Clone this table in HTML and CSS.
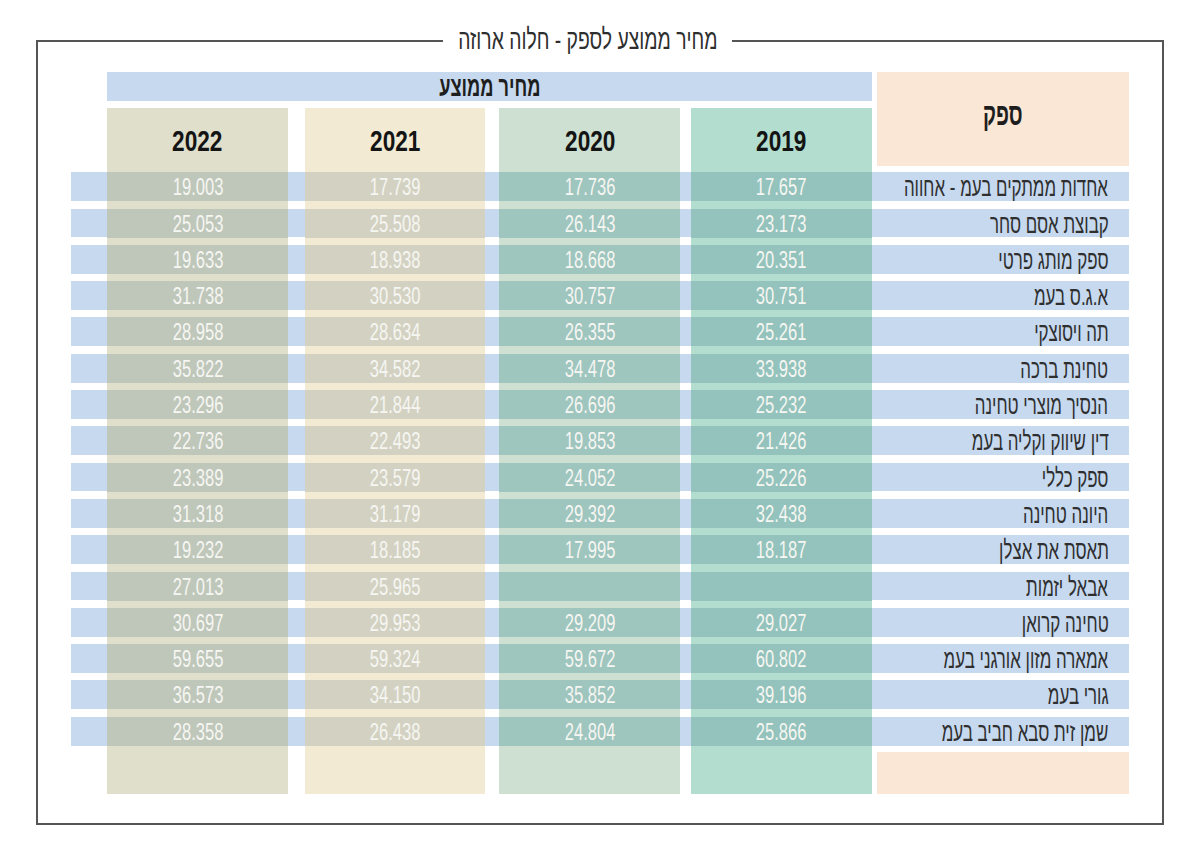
FILE: index.html
```html
<!DOCTYPE html>
<html lang="he" dir="rtl">
<head>
<meta charset="utf-8">
<title>מחיר ממוצע לספק - חלוה ארוזה</title>
<link rel="stylesheet" href="styles.css">
</head>
<body>
<div class="page">
  <div class="frame">
    <div class="title"><span class="sq title-text">מחיר ממוצע לספק - חלוה ארוזה</span></div>
    <div class="table">
      <div class="head-bar"><span class="sq head-text">מחיר ממוצע</span></div>
      <div class="sup-head"><span class="sq sup-text">ספק</span></div>
      <div class="col col-19"><div class="year"><span class="sq year-text">2019</span></div></div>
      <div class="col col-20"><div class="year"><span class="sq year-text">2020</span></div></div>
      <div class="col col-21"><div class="year"><span class="sq year-text">2021</span></div></div>
      <div class="col col-22"><div class="year"><span class="sq year-text">2022</span></div></div>
      <div class="rows">
        <div class="row"><div class="name"><span class="sq name-text">אחדות ממתקים בעמ - אחווה</span></div><div class="num n19"><span class="sq">17.657</span></div><div class="num n20"><span class="sq">17.736</span></div><div class="num n21"><span class="sq">17.739</span></div><div class="num n22"><span class="sq">19.003</span></div></div>
        <div class="row"><div class="name"><span class="sq name-text">קבוצת אסם סחר</span></div><div class="num n19"><span class="sq">23.173</span></div><div class="num n20"><span class="sq">26.143</span></div><div class="num n21"><span class="sq">25.508</span></div><div class="num n22"><span class="sq">25.053</span></div></div>
        <div class="row"><div class="name"><span class="sq name-text">ספק מותג פרטי</span></div><div class="num n19"><span class="sq">20.351</span></div><div class="num n20"><span class="sq">18.668</span></div><div class="num n21"><span class="sq">18.938</span></div><div class="num n22"><span class="sq">19.633</span></div></div>
        <div class="row"><div class="name"><span class="sq name-text">א.ג.ס בעמ</span></div><div class="num n19"><span class="sq">30.751</span></div><div class="num n20"><span class="sq">30.757</span></div><div class="num n21"><span class="sq">30.530</span></div><div class="num n22"><span class="sq">31.738</span></div></div>
        <div class="row"><div class="name"><span class="sq name-text">תה ויסוצקי</span></div><div class="num n19"><span class="sq">25.261</span></div><div class="num n20"><span class="sq">26.355</span></div><div class="num n21"><span class="sq">28.634</span></div><div class="num n22"><span class="sq">28.958</span></div></div>
        <div class="row"><div class="name"><span class="sq name-text">טחינת ברכה</span></div><div class="num n19"><span class="sq">33.938</span></div><div class="num n20"><span class="sq">34.478</span></div><div class="num n21"><span class="sq">34.582</span></div><div class="num n22"><span class="sq">35.822</span></div></div>
        <div class="row"><div class="name"><span class="sq name-text">הנסיך מוצרי טחינה</span></div><div class="num n19"><span class="sq">25.232</span></div><div class="num n20"><span class="sq">26.696</span></div><div class="num n21"><span class="sq">21.844</span></div><div class="num n22"><span class="sq">23.296</span></div></div>
        <div class="row"><div class="name"><span class="sq name-text">דין שיווק וקליה בעמ</span></div><div class="num n19"><span class="sq">21.426</span></div><div class="num n20"><span class="sq">19.853</span></div><div class="num n21"><span class="sq">22.493</span></div><div class="num n22"><span class="sq">22.736</span></div></div>
        <div class="row"><div class="name"><span class="sq name-text">ספק כללי</span></div><div class="num n19"><span class="sq">25.226</span></div><div class="num n20"><span class="sq">24.052</span></div><div class="num n21"><span class="sq">23.579</span></div><div class="num n22"><span class="sq">23.389</span></div></div>
        <div class="row"><div class="name"><span class="sq name-text">היונה טחינה</span></div><div class="num n19"><span class="sq">32.438</span></div><div class="num n20"><span class="sq">29.392</span></div><div class="num n21"><span class="sq">31.179</span></div><div class="num n22"><span class="sq">31.318</span></div></div>
        <div class="row"><div class="name"><span class="sq name-text">תאסת את אצלן</span></div><div class="num n19"><span class="sq">18.187</span></div><div class="num n20"><span class="sq">17.995</span></div><div class="num n21"><span class="sq">18.185</span></div><div class="num n22"><span class="sq">19.232</span></div></div>
        <div class="row"><div class="name"><span class="sq name-text">אבאל יזמות</span></div><div class="num n19"></div><div class="num n20"></div><div class="num n21"><span class="sq">25.965</span></div><div class="num n22"><span class="sq">27.013</span></div></div>
        <div class="row"><div class="name"><span class="sq name-text">טחינה קרואן</span></div><div class="num n19"><span class="sq">29.027</span></div><div class="num n20"><span class="sq">29.209</span></div><div class="num n21"><span class="sq">29.953</span></div><div class="num n22"><span class="sq">30.697</span></div></div>
        <div class="row"><div class="name"><span class="sq name-text">אמארה מזון אורגני בעמ</span></div><div class="num n19"><span class="sq">60.802</span></div><div class="num n20"><span class="sq">59.672</span></div><div class="num n21"><span class="sq">59.324</span></div><div class="num n22"><span class="sq">59.655</span></div></div>
        <div class="row"><div class="name"><span class="sq name-text">גורי בעמ</span></div><div class="num n19"><span class="sq">39.196</span></div><div class="num n20"><span class="sq">35.852</span></div><div class="num n21"><span class="sq">34.150</span></div><div class="num n22"><span class="sq">36.573</span></div></div>
        <div class="row"><div class="name"><span class="sq name-text">שמן זית סבא חביב בעמ</span></div><div class="num n19"><span class="sq">25.866</span></div><div class="num n20"><span class="sq">24.804</span></div><div class="num n21"><span class="sq">26.438</span></div><div class="num n22"><span class="sq">28.358</span></div></div>
      </div>
      <div class="sup-foot"></div>
    </div>
  </div>
</div>
</body>
</html>
```
FILE: styles.css
```css
:root {
  --tracks: 252px 5.3px 181px 10.7px 181px 14px 180px 17.3px 180.7px 36.3px;
  --blue: #c6d9ef;
  --peach: #fae7d5;
}

* { box-sizing: border-box; }

html, body {
  margin: 0;
  background: #ffffff;
}

body {
  font-family: "Liberation Sans", "DejaVu Sans", sans-serif;
  color: #333333;
}

.page {
  padding-top: 40px;
  height: 848px;
}

.frame {
  position: relative;
  width: 1128px;
  height: 785px;
  margin: 0 auto;
  border: 2px solid #555555;
  padding: 29.5px 32.7px 0;
}

.sq {
  display: inline-block;
  white-space: nowrap;
  transform-origin: center center;
}

.title {
  position: absolute;
  top: -17px;
  right: 430px;
  width: 289px;
  height: 30px;
  background: #ffffff;
  display: flex;
  align-items: center;
  justify-content: center;
}

.title-text {
  font-size: 28px;
  line-height: 30px;
  color: #2e2e2e;
  transform: scaleX(0.69);
}

.table {
  display: grid;
  grid-template-columns: var(--tracks);
  grid-template-rows: 29px 7px 58.5px 6.3px 573.3px 6.6px 42px;
}

.head-bar {
  grid-row: 1;
  grid-column: 3 / 10;
  background: var(--blue);
  display: flex;
  align-items: center;
  justify-content: center;
  padding-top: 1px;
}

.head-text {
  font-size: 28px;
  line-height: 28px;
  font-weight: 700;
  color: #1e1e1e;
  transform: scaleX(0.65);
}

.sup-head {
  grid-row: 1 / 4;
  grid-column: 1;
  background: var(--peach);
  display: flex;
  align-items: center;
  justify-content: center;
  padding-bottom: 8px;
}

.sup-text {
  font-size: 32px;
  font-weight: 700;
  color: #1e1e1e;
  transform: scaleX(0.62);
}

.col { grid-row: 3 / 8; }
.col-19 { grid-column: 3; background: #b2ddcf; }
.col-20 { grid-column: 5; background: #cde0d2; }
.col-21 { grid-column: 7; background: #f2ead3; }
.col-22 { grid-column: 9; background: #dfdfcc; }

.year {
  height: 64.8px;
  display: flex;
  align-items: center;
  justify-content: center;
  padding-top: 4px;
}

.year-text {
  font-size: 29px;
  font-weight: 700;
  color: #141414;
  transform: scaleX(0.78);
}

.rows {
  grid-row: 5;
  grid-column: 1 / 11;
  display: flex;
  flex-direction: column;
  gap: 7.5px;
}

.row {
  height: 28.8px;
  display: grid;
  grid-template-columns: var(--tracks);
  background: var(--blue);
}

.name {
  grid-column: 1;
  display: flex;
  align-items: center;
  justify-content: flex-start;
  padding-right: 21px;
  padding-top: 1px;
}

.name-text {
  font-size: 26px;
  line-height: 28px;
  color: #2f2f2f;
  transform-origin: right center;
  transform: scaleX(0.65);
}

.num {
  display: flex;
  align-items: center;
  justify-content: center;
  padding-top: 2px;
  font-size: 23px;
  color: #f6f6f2;
}

.num .sq { transform: scaleX(0.72); }

.n19 { grid-column: 3; background: #93c3bc; }
.n20 { grid-column: 5; background: #9ec5be; }
.n21 { grid-column: 7; background: #d3d2c2; }
.n22 { grid-column: 9; background: #bfc7bb; }

.sup-foot {
  grid-row: 7;
  grid-column: 1;
  background: var(--peach);
}
```
